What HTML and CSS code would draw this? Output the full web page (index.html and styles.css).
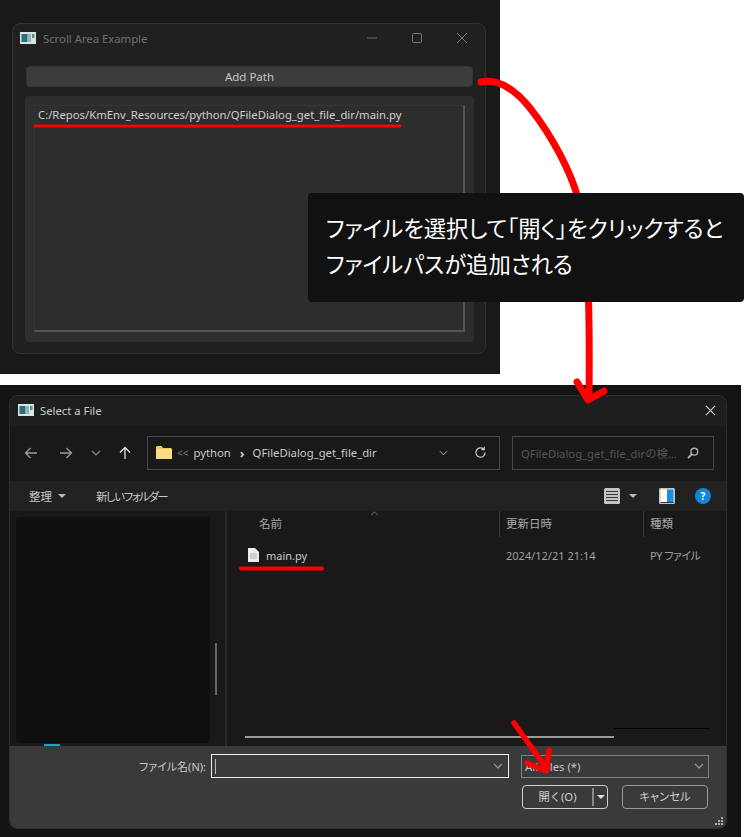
FILE: index.html
```html
<!DOCTYPE html>
<html lang="ja">
<head>
    <meta charset="UTF-8">
    <title>Scroll Area Example</title>
    <link rel="stylesheet" href="styles.css">
</head>
<body>
<div class="stage">
    <section class="shot-top">
        <div class="window">
            <div class="win-title">
                <svg class="app-icon" viewBox="0 0 16 12"><rect width="16" height="12" fill="#d8e4e4"/><rect x="1.5" y="2" width="6" height="8" fill="#2f6f78"/><rect x="8" y="2" width="3" height="8" fill="#8fb5b5"/><rect x="12" y="2" width="2.5" height="4" fill="#5b8f96"/></svg>
                <span class="win-name">Scroll Area Example</span>
                <div class="win-btns">
                    <svg viewBox="0 0 12 12"><path d="M1 6h10" stroke="#6a6a6a" fill="none"/></svg>
                    <svg viewBox="0 0 12 12"><rect x="1.500" y="1.500" width="9" height="9" rx="1" stroke="#777" fill="none"/></svg>
                    <svg viewBox="0 0 12 12"><path d="M1 1l10 10M11 1L1 11" stroke="#777" fill="none"/></svg>
                </div>
            </div>
            <div class="add-path">Add Path</div>
            <div class="scroll-panel">
                <div class="scroll-inner">
                    <div class="path-text">C:/Repos/KmEnv_Resources/python/QFileDialog_get_file_dir/main.py</div>
                </div>
            </div>
        </div>
    </section>

    <section class="shot-bottom">
        <div class="dialog">
            <div class="dlg-title">
                <svg class="app-icon" viewBox="0 0 16 12"><rect width="16" height="12" fill="#d8e4e4"/><rect x="1.5" y="2" width="6" height="8" fill="#2f6f78"/><rect x="8" y="2" width="3" height="8" fill="#8fb5b5"/><rect x="12" y="2" width="2.5" height="4" fill="#5b8f96"/></svg>
                <span class="dlg-name">Select a File</span>
                <svg class="dlg-close" viewBox="0 0 12 12"><path d="M1 1l10 10M11 1L1 11" stroke="#d0d0d0" stroke-width="1.2" fill="none"/></svg>
            </div>
            <div class="nav-bar">
                <svg class="nav-icon" viewBox="0 0 14 14"><path d="M13 7H1.5M6.5 2L1.5 7l5 5" stroke="#9a9a9a" stroke-width="1.3" fill="none"/></svg>
                <svg class="nav-icon nav-fwd" viewBox="0 0 14 14"><path d="M1 7h11.5M7.5 2l5 5-5 5" stroke="#9a9a9a" stroke-width="1.3" fill="none"/></svg>
                <svg class="nav-chev" viewBox="0 0 10 6"><path d="M1 1l4 4 4-4" stroke="#888" stroke-width="1.2" fill="none"/></svg>
                <svg class="nav-icon nav-up" viewBox="0 0 14 14"><path d="M7 13V1.5M2 6.5l5-5 5 5" stroke="#e0e0e0" stroke-width="1.3" fill="none"/></svg>
                <div class="address">
                    <svg class="folder" viewBox="0 0 16 13"><path d="M0 1.5C0 .7.6 0 1.4 0h4l1.6 2h7.6c.8 0 1.4.6 1.4 1.4V12c0 .6-.5 1-1 1H1c-.6 0-1-.4-1-1z" fill="#f6c95e"/><rect y="3" width="16" height="10" rx="1" fill="#fcdc82"/></svg>
                    <span class="crumb-more">&lt;&lt;</span>
                    <span class="crumb">python</span>
                    <span class="crumb-sep">›</span>
                    <span class="crumb crumb-dir">QFileDialog_get_file_dir</span>
                    <svg class="addr-chev" viewBox="0 0 10 6"><path d="M1 1l4 4 4-4" stroke="#bbb" stroke-width="1.1" fill="none"/></svg>
                    <svg class="refresh" viewBox="0 0 14 14"><path d="M12 7a5 5 0 1 1-1.6-3.7M11 .8v3H8" stroke="#c8c8c8" stroke-width="1.3" fill="none"/></svg>
                </div>
                <div class="search">
                    <span class="search-text">QFileDialog_get_file_dirの検...</span>
                    <svg class="search-icon" viewBox="0 0 12 12"><circle cx="7.3" cy="4.7" r="3.4" stroke="#b0b0b0" stroke-width="1.4" fill="none"/><path d="M5 7L1 11" stroke="#b0b0b0" stroke-width="1.8"/></svg>
                </div>
            </div>
            <div class="cmd-bar">
                <span class="cmd-item">整理</span>
                <span class="caret"></span>
                <span class="cmd-item cmd-new">新しいフォルダー</span>
                <svg class="view-icon" viewBox="0 0 16 16"><rect width="16" height="16" rx="1.5" fill="#c4c4c4"/><path d="M2 3.5h12M2 6.5h12M2 9.5h12M2 12.5h12" stroke="#333" stroke-width="1"/></svg>
                <span class="caret caret-view"></span>
                <svg class="pane-icon" viewBox="0 0 16 16"><rect width="16" height="16" rx="1.5" fill="#c4c4c4"/><rect x="1.5" y="1.5" width="13" height="13" fill="#fff"/><rect x="8" y="1.5" width="6.5" height="13" fill="#1a8fe0"/><rect x="1.5" y="14" width="13" height="1" fill="#333"/></svg>
                <span class="help-icon">?</span>
            </div>
            <div class="body-area">
                <div class="side">
                    <div class="side-panel"></div>
                    <div class="side-thumb"></div>
                </div>
                <div class="file-pane">
                    <div class="head-row">
                        <span class="col col-name">名前</span>
                        <span class="col col-date">更新日時</span>
                        <span class="col col-type">種類</span>
                        <svg class="sort-mark" viewBox="0 0 10 6"><path d="M1 5l4-4 4 4" stroke="#888" fill="none"/></svg>
                    </div>
                    <div class="file-row">
                        <span class="col-name file-name">
                            <svg class="file-icon" viewBox="0 0 11 14"><path d="M0 0h7l4 4v10H0z" fill="#ececec"/><path d="M2 6h7M2 8h7M2 10h7" stroke="#aaa" stroke-width=".8"/></svg>
                            main.py
                        </span>
                        <span class="col-date file-date">2024/12/21 21:14</span>
                        <span class="col-type file-type">PY ファイル</span>
                    </div>
                    <div class="hscroll">
                        <div class="hscroll-bar"></div>
                        <div class="hscroll-line"></div>
                    </div>
                </div>
                <div class="cyan-mark"></div>
            </div>
            <div class="footer">
                <div class="name-row">
                    <span class="name-label">ファイル名(N):</span>
                    <div class="name-input">
                        <span class="cursor"></span>
                        <svg class="combo-chev" viewBox="0 0 10 6"><path d="M1 1l4 4 4-4" stroke="#999" stroke-width="1.1" fill="none"/></svg>
                    </div>
                    <div class="type-combo">
                        <span>All Files (*)</span>
                        <svg class="combo-chev" viewBox="0 0 10 6"><path d="M1 1l4 4 4-4" stroke="#999" stroke-width="1.1" fill="none"/></svg>
                    </div>
                </div>
                <div class="btn-row">
                    <div class="btn btn-open">
                        <span class="btn-open-text">開く(O)</span>
                        <span class="btn-split"><span class="caret caret-btn"></span></span>
                    </div>
                    <div class="btn btn-cancel">キャンセル</div>
                </div>
                <svg class="grip" viewBox="0 0 9 9"><path d="M7 1h2v2H7zM4 4h2v2H4zM7 4h2v2H7zM1 7h2v2H1zM4 7h2v2H4zM7 7h2v2H7z" fill="#aaa"/></svg>
            </div>
        </div>
    </section>

    <!-- 赤い注釈 -->
    <svg class="marks" viewBox="0 0 744 837">
        <g fill="none" stroke="#f00" stroke-linecap="round" stroke-linejoin="round">
            <path d="M35 126H400" stroke-width="3"/>
            <path d="M241 568.500H322" stroke-width="4"/>
            <path d="M481 82C500 78 517 92 530 108C552 136 570 170 578 198C588 240 590 300 589 398" stroke-width="7"/>
            <path d="M577 382L588 400L604 391" stroke-width="7"/>
            <path d="M514 723L547 769" stroke-width="5.500"/>
            <path d="M527 763L546 771L549 750" stroke-width="5.500"/>
        </g>
    </svg>

    <div class="callout">ファイルを選択して「開く」をクリックすると<br>ファイルパスが追加される</div>
</div>
</body>
</html>
```

FILE: styles.css
```css
*{
    margin:0;
    padding:0;
    box-sizing:border-box;
}
body{
    background:#fff;
    font-family:"Noto Sans","Noto Sans CJK JP",sans-serif;
}
.stage{
    position:relative;
    width:744px;
    height:837px;
    overflow:hidden;
}

/* 上のウィンドウ */
.shot-top{
    width:500px;
    height:374px;
    padding:23px 14px 20px 12px;
    background:#191919;
}
.window{
    height:331px;
    display:flex;
    flex-direction:column;
    padding:0 12px 11px 12px;
    background:#202020;
    border:1px solid #333;
    border-radius:8px;
}
.win-title{
    height:42px;
    flex:none;
    display:flex;
    align-items:center;
    margin-left:-5px;
    padding:0 0 14px 0;
}
.app-icon{
    width:16px;
    height:12px;
    flex:none;
}
.win-name{
    margin-left:7px;
    font-size:11.300px;
    color:#6f6f6f;
}
.win-btns{
    margin-left:auto;
    display:flex;
    gap:33px;
    padding-right:5px;
}
.win-btns svg{
    width:12px;
    height:12px;
}
.add-path{
    flex:none;
    height:21px;
    margin-left:1px;
    line-height:19px;
    text-align:center;
    font-size:11.500px;
    color:#c4c4c4;
    background:#3c3c3c;
    border:1px solid #333;
    border-radius:4px;
}
.scroll-panel{
    flex:1;
    margin-top:9px;
    padding:9px 9px 10px 9px;
    background:#2e2e2e;
    border-radius:4px;
    margin-right:-1px;
}
.scroll-inner{
    height:100%;
    background:#2d2d2d;
    border-right:2px solid #555;
    border-bottom:2px solid #555;
    border-left:1px solid #343434;
    border-top:1px solid #343434;
}
.path-text{
    padding:0 0 0 3px;
    font-size:11.300px;
    line-height:18px;
    color:#cfcfcf;
    white-space:nowrap;
}

/* 下のダイアログ */
.shot-bottom{
    width:741px;
    height:452px;
    margin-top:11px;
    padding:10px 14px 8px 9px;
    background:#141414;
}
.dialog{
    height:434px;
    display:flex;
    flex-direction:column;
    background:#1c1c1c;
    border:1px solid #2e2e2e;
    border-radius:8px;
    overflow:hidden;
}
.dlg-title{
    height:30px;
    flex:none;
    display:flex;
    align-items:center;
    padding:0 10px 2px 8px;
    background:#1e1e1e;
}
.dlg-name{
    margin-left:6px;
    font-size:11.300px;
    color:#c8c8c8;
}
.dlg-close{
    margin-left:auto;
    width:11px;
    height:11px;
}
.nav-bar{
    height:55px;
    flex:none;
    display:flex;
    align-items:center;
    padding:0 12px 2px 14px;
    background:#191919;
}
.nav-icon{
    width:14px;
    height:14px;
    flex:none;
}
.nav-fwd{
    margin-left:21px;
}
.nav-chev{
    width:10px;
    height:6px;
    margin-left:18px;
    flex:none;
}
.nav-up{
    margin-left:17px;
}
.address{
    width:353px;
    height:34px;
    margin-left:15px;
    display:flex;
    align-items:center;
    padding:0 12px 0 8px;
    border:1px solid #484848;
    flex:none;
}
.folder{
    width:16px;
    height:13px;
    flex:none;
}
.crumb-more{
    margin-left:5px;
    font-size:10px;
    color:#777;
}
.crumb{
    margin-left:5px;
    font-size:11.300px;
    color:#c8c8c8;
}
.crumb-sep{
    margin-left:9px;
    font-size:13px;
    font-weight:bold;
    color:#ccc;
}
.crumb-dir{
    margin-left:8px;
}
.addr-chev{
    margin-left:auto;
    width:9px;
    height:6px;
}
.refresh{
    margin-left:26px;
    width:13px;
    height:13px;
}
.search{
    width:202px;
    height:34px;
    margin-left:12px;
    display:flex;
    align-items:center;
    padding:0 14px 0 8px;
    border:1px solid #484848;
    flex:none;
}
.search-text{
    font-size:11.300px;
    color:#555;
    white-space:nowrap;
}
.search-icon{
    margin-left:auto;
    width:12px;
    height:12px;
    flex:none;
}
.cmd-bar{
    height:30px;
    flex:none;
    display:flex;
    align-items:center;
    padding:0 15px 0 19px;
    background:#212121;
}
.cmd-item{
    font-size:11.500px;
    color:#c8c8c8;
}
.caret{
    width:0;
    height:0;
    margin-left:6px;
    border-left:4px solid transparent;
    border-right:4px solid transparent;
    border-top:4px solid #b8b8b8;
}
.cmd-new{
    margin-left:30px;
    letter-spacing:-1.500px;
    font-feature-settings:"palt";
}
.view-icon{
    margin-left:auto;
    width:16px;
    height:16px;
}
.caret-view{
    margin-left:9px;
}
.pane-icon{
    margin-left:22px;
    width:16px;
    height:16px;
}
.help-icon{
    width:16px;
    height:16px;
    margin-left:20px;
    border-radius:50%;
    background:#0f86d8;
    color:#fff;
    font-size:10px;
    font-weight:bold;
    line-height:16px;
    text-align:center;
}
.body-area{
    position:relative;
    flex:1;
    display:flex;
    background:#191919;
}
.side{
    width:217px;
    flex:none;
    display:flex;
    padding:6px 0 3px 6px;
    border-right:2px solid #272727;
}
.side-panel{
    width:194px;
    background:#101010;
    border-radius:4px;
}
.side-thumb{
    width:2px;
    height:52px;
    margin:126px 0 0 5px;
    background:#666;
}
.file-pane{
    flex:1;
    display:flex;
    flex-direction:column;
    position:relative;
}
.head-row{
    height:26px;
    flex:none;
    display:flex;
    position:relative;
    font-size:11.500px;
    color:#a8a8a8;
}
.col{
    line-height:25px;
}
.col-name{
    width:272px;
    padding-left:32px;
}
.col-date{
    width:144px;
}
.head-row .col-date{
    padding-left:6px;
    border-left:1px solid #3a3a3a;
}
.head-row .col-type{
    padding-left:6px;
    border-left:1px solid #3a3a3a;
}
.sort-mark{
    position:absolute;
    left:143px;
    top:0;
    width:9px;
    height:5px;
}
.file-row{
    display:flex;
    align-items:center;
    margin-top:7px;
    height:22px;
    font-size:11px;
}
.file-name{
    display:flex;
    align-items:center;
    gap:7px;
    padding-left:21px;
    font-size:11px;
    color:#c8c8c8;
}
.file-icon{
    width:11px;
    height:14px;
}
.file-date{
    padding-left:7px;
    font-size:11px;
    color:#a0a0a0;
}
.file-type{
    padding-left:7px;
    font-size:11px;
    color:#a0a0a0;
    white-space:nowrap;
    font-feature-settings:"palt";
    letter-spacing:-0.500px;
}
.hscroll{
    margin-top:auto;
    margin-bottom:9px;
    display:flex;
    align-items:flex-start;
    padding-left:18px;
    height:9px;
}
.hscroll-bar{
    width:369px;
    height:2px;
    margin-top:8px;
    background:#9a9a9a;
}
.hscroll-line{
    width:95px;
    height:1px;
    background:#000;
}
.cyan-mark{
    position:absolute;
    left:34px;
    bottom:0;
    width:16px;
    height:2px;
    background:#1aa5c4;
}
.footer{
    height:82px;
    flex:none;
    position:relative;
    padding:8px 17px 0 0;
    background:#3a3a3a;
}
.name-row{
    display:flex;
    align-items:center;
    justify-content:flex-end;
}
.name-label{
    margin-right:5px;
    font-size:11px;
    line-height:18px;
    padding-top:2px;
    color:#c8c8c8;
    font-feature-settings:"palt";
}
.name-input{
    width:298px;
    height:24px;
    display:flex;
    align-items:center;
    justify-content:space-between;
    padding:0 5px 0 3px;
    border:1px solid #eee;
}
.cursor{
    width:1px;
    height:15px;
    background:#bbb;
}
.combo-chev{
    width:10px;
    height:6px;
}
.type-combo{
    width:188px;
    height:23px;
    margin-left:12px;
    display:flex;
    align-items:center;
    justify-content:space-between;
    padding:0 4px 0 3px;
    border:1px solid #808080;
    font-size:11.300px;
    color:#c4c4c4;
}
.btn-row{
    display:flex;
    justify-content:flex-end;
    gap:14px;
    margin-top:7px;
    padding-right:1px;
}
.btn{
    height:24px;
    border-radius:4px;
    border:1px solid #9a9a9a;
    font-size:11.300px;
    line-height:22px;
    color:#d0d0d0;
    text-align:center;
}
.btn-open{
    width:86px;
    display:flex;
    border-color:#cfcfcf;
}
.btn-open-text{
    flex:1;
}
.btn-split{
    width:15px;
    display:flex;
    align-items:center;
    justify-content:center;
    margin:2px 0;
    border-left:2px solid #8a8a8a;
}
.caret-btn{
    margin-left:0;
    border-top-color:#ddd;
}
.btn-cancel{
    width:86px;
    font-feature-settings:"palt";
}
.grip{
    position:absolute;
    right:3px;
    bottom:3px;
    width:9px;
    height:9px;
}

/* 注釈 */
.marks{
    position:absolute;
    left:0;
    top:0;
    width:744px;
    height:837px;
}
.callout{
    position:absolute;
    left:308px;
    top:193px;
    width:436px;
    height:109px;
    padding:16px 0 0 18px;
    background:#111;
    border-radius:4px;
    font-family:"Noto Sans CJK JP",sans-serif;
    font-size:22.300px;
    font-weight:400;
    line-height:36px;
    color:#fff;
    font-feature-settings:"palt";
    white-space:nowrap;
}
```
